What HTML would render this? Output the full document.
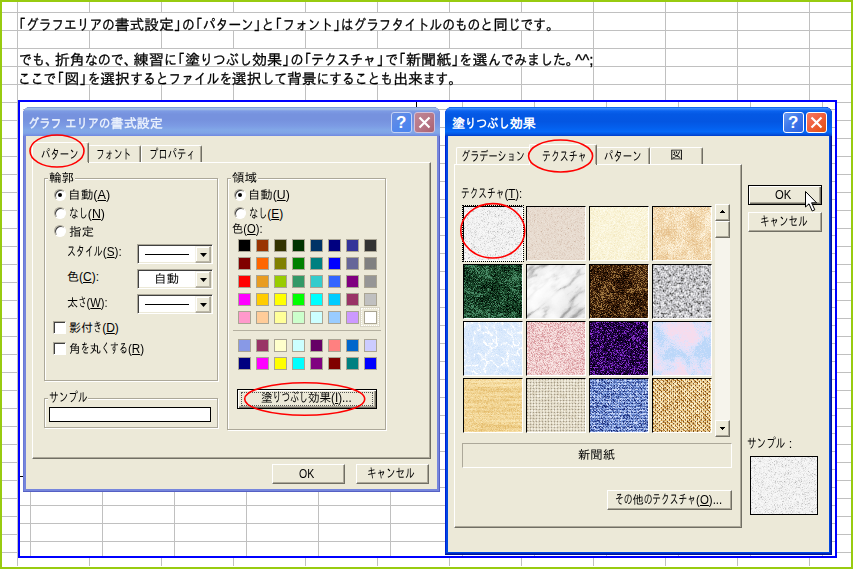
<!DOCTYPE html>
<html lang="ja"><head><meta charset="utf-8"><title>塗りつぶし効果</title>
<style>
html,body{margin:0;padding:0}
body{width:853px;height:569px;overflow:hidden;position:relative;background:#fff;font-family:"Liberation Sans","IPAGothic",sans-serif;font-size:12px;color:#000}
div,span,svg{position:absolute;box-sizing:border-box}
.t{white-space:nowrap;transform-origin:0 0;line-height:1;display:block}
.t .r{position:static;display:inline-block;transform-origin:0 0}
.t u{position:static;text-decoration:underline;text-underline-offset:1px}
.vl{width:1px;background:#c0c0c0}
.hl{height:1px;background:#c0c0c0}
.btn{background:#ece9d8;border:1px solid;border-color:#fff #716f64 #716f64 #fff;box-shadow:inset -1px -1px 0 #aca899}
.sbtn{background:#ece9d8;border:1px solid;border-color:#f4f2e8 #aca899 #aca899 #f4f2e8;box-shadow:inset -1px -1px 0 #bcb8a8, inset 1px 1px 0 #fff}
.dbtn{background:#ece9d8;border:1px solid #000;box-shadow:inset 1px 1px 0 #fff,inset -1px -1px 0 #716f64,inset -2px -2px 0 #aca899}
.sunk{border:1px solid;border-color:#aca899 #fff #fff #aca899;box-shadow:inset 1px 1px 0 #404040, inset -1px -1px 0 #ece9d8;background:#fff}
.grp{border:1px solid #aca899;box-shadow:1px 1px 0 #fff, inset 1px 1px 0 #fff}
.lbl{background:#ece9d8}
.panel{border:1px solid;border-color:#fff #716f64 #716f64 #fff;box-shadow:inset -1px -1px 0 #aca899;background:#ece9d8}
.tab{border:1px solid;border-color:#fff #716f64 transparent #fff;border-bottom:none;box-shadow:inset -1px 0 0 #aca899;background:#ece9d8;border-radius:2px 2px 0 0}
.sw{width:13px;height:13px;border:1px solid #aaa594}
.sw i{position:absolute;left:0;top:0;width:11px;height:11px;display:block}
.radio{width:12px;height:12px;border-radius:50%;background:#fff;border:1px solid;border-color:#aca899 #fff #fff #aca899;box-shadow:inset 1px 1px 0 #404040}
.chk{width:13px;height:13px;background:#fff;border:1px solid;border-color:#aca899 #fff #fff #aca899;box-shadow:inset 1px 1px 0 #404040}
.tile{border:1px solid;border-color:#000 #fff #fff #000;overflow:hidden}
</style></head>
<body>
<svg style="left:0;top:0" width="0" height="0"><defs><filter id="tx0" x="0" y="0" width="100%" height="100%" color-interpolation-filters="sRGB"><feTurbulence type="fractalNoise" baseFrequency="1.7" numOctaves="1" seed="3"/><feColorMatrix type="matrix" values="2.000 0 0 0 -0.500 2.000 0 0 0 -0.500 2.000 0 0 0 -0.500 0 0 0 0 1" result="F"/><feTurbulence type="fractalNoise" baseFrequency="0.25" numOctaves="2" seed="11"/><feColorMatrix type="matrix" values="1.000 0 0 0 0.000 1.000 0 0 0 0.000 1.000 0 0 0 0.000 0 0 0 0 1" result="C"/><feComposite operator="arithmetic" in="F" in2="C" k1="0" k2="0.70" k3="0.30" k4="0" result="N"/><feColorMatrix type="matrix" values="1.500 0 0 0 -0.130 1.500 0 0 0 -0.130 1.500 0 0 0 -0.130 0 0 0 0 1"/><feComponentTransfer><feFuncR type="table" tableValues="0.706 0.847 0.933 0.961 0.976"/><feFuncG type="table" tableValues="0.706 0.847 0.933 0.961 0.976"/><feFuncB type="table" tableValues="0.706 0.847 0.933 0.961 0.976"/></feComponentTransfer></filter><filter id="tx1" x="0" y="0" width="100%" height="100%" color-interpolation-filters="sRGB"><feTurbulence type="fractalNoise" baseFrequency="1.7" numOctaves="1" seed="4"/><feColorMatrix type="matrix" values="1.000 0 0 0 0.000 1.000 0 0 0 0.000 1.000 0 0 0 0.000 0 0 0 0 1" result="F"/><feTurbulence type="fractalNoise" baseFrequency="0.3" numOctaves="1" seed="12"/><feColorMatrix type="matrix" values="0.600 0 0 0 0.200 0.600 0 0 0 0.200 0.600 0 0 0 0.200 0 0 0 0 1" result="C"/><feComposite operator="arithmetic" in="F" in2="C" k1="0" k2="0.80" k3="0.20" k4="0" result="N"/><feColorMatrix type="matrix" values="1.500 0 0 0 -0.250 1.500 0 0 0 -0.250 1.500 0 0 0 -0.250 0 0 0 0 1"/><feComponentTransfer><feFuncR type="table" tableValues="0.722 0.863 0.910 0.925 0.949"/><feFuncG type="table" tableValues="0.596 0.792 0.863 0.886 0.918"/><feFuncB type="table" tableValues="0.502 0.737 0.816 0.847 0.886"/></feComponentTransfer></filter><filter id="tx2" x="0" y="0" width="100%" height="100%" color-interpolation-filters="sRGB"><feTurbulence type="fractalNoise" baseFrequency="1.7" numOctaves="1" seed="5"/><feColorMatrix type="matrix" values="1.600 0 0 0 -0.300 1.600 0 0 0 -0.300 1.600 0 0 0 -0.300 0 0 0 0 1" result="F"/><feTurbulence type="fractalNoise" baseFrequency="0.03" numOctaves="2" seed="13"/><feColorMatrix type="matrix" values="1.500 0 0 0 -0.250 1.500 0 0 0 -0.250 1.500 0 0 0 -0.250 0 0 0 0 1" result="C"/><feComposite operator="arithmetic" in="F" in2="C" k1="0" k2="0.70" k3="0.30" k4="0" result="N"/><feColorMatrix type="matrix" values="1.500 0 0 0 -0.250 1.500 0 0 0 -0.250 1.500 0 0 0 -0.250 0 0 0 0 1"/><feComponentTransfer><feFuncR type="table" tableValues="0.949 0.980 1.000"/><feFuncG type="table" tableValues="0.902 0.957 0.992"/><feFuncB type="table" tableValues="0.737 0.847 0.941"/></feComponentTransfer></filter><filter id="tx3" x="0" y="0" width="100%" height="100%" color-interpolation-filters="sRGB"><feTurbulence type="fractalNoise" baseFrequency="1.7" numOctaves="1" seed="6"/><feColorMatrix type="matrix" values="2.000 0 0 0 -0.500 2.000 0 0 0 -0.500 2.000 0 0 0 -0.500 0 0 0 0 1" result="F"/><feTurbulence type="fractalNoise" baseFrequency="0.06" numOctaves="3" seed="14"/><feColorMatrix type="matrix" values="2.000 0 0 0 -0.500 2.000 0 0 0 -0.500 2.000 0 0 0 -0.500 0 0 0 0 1" result="C"/><feComposite operator="arithmetic" in="F" in2="C" k1="0" k2="0.60" k3="0.40" k4="0" result="N"/><feColorMatrix type="matrix" values="1.700 0 0 0 -0.350 1.700 0 0 0 -0.350 1.700 0 0 0 -0.350 0 0 0 0 1"/><feComponentTransfer><feFuncR type="table" tableValues="0.902 0.957 0.996"/><feFuncG type="table" tableValues="0.753 0.863 0.957"/><feFuncB type="table" tableValues="0.549 0.706 0.878"/></feComponentTransfer></filter><filter id="tx4" x="0" y="0" width="100%" height="100%" color-interpolation-filters="sRGB"><feTurbulence type="fractalNoise" baseFrequency="1.7" numOctaves="1" seed="7"/><feColorMatrix type="matrix" values="3.200 0 0 0 -1.100 3.200 0 0 0 -1.100 3.200 0 0 0 -1.100 0 0 0 0 1" result="F"/><feTurbulence type="fractalNoise" baseFrequency="0.05" numOctaves="3" seed="15"/><feColorMatrix type="matrix" values="1.600 0 0 0 -0.300 1.600 0 0 0 -0.300 1.600 0 0 0 -0.300 0 0 0 0 1" result="C"/><feComposite operator="arithmetic" in="F" in2="C" k1="0" k2="0.65" k3="0.35" k4="0" result="N"/><feTurbulence type="turbulence" baseFrequency="0.04" numOctaves="3" seed="27"/><feColorMatrix type="matrix" values="1 0 0 0 0 1 0 0 0 0 1 0 0 0 0 0 0 0 0 1"/><feComponentTransfer result="V"><feFuncR type="table" tableValues="1 0.45 0.1 0 0 0 0 0 0 0 0 0 0"/><feFuncG type="table" tableValues="1 0.45 0.1 0 0 0 0 0 0 0 0 0 0"/><feFuncB type="table" tableValues="1 0.45 0.1 0 0 0 0 0 0 0 0 0 0"/></feComponentTransfer><feComposite operator="arithmetic" in="N" in2="V" k1="0" k2="1" k3="0.50" k4="0"/><feColorMatrix type="matrix" values="1.500 0 0 0 -0.270 1.500 0 0 0 -0.270 1.500 0 0 0 -0.270 0 0 0 0 1"/><feComponentTransfer><feFuncR type="table" tableValues="0.000 0.039 0.094 0.141 0.298"/><feFuncG type="table" tableValues="0.047 0.157 0.267 0.353 0.549"/><feFuncB type="table" tableValues="0.016 0.078 0.157 0.220 0.408"/></feComponentTransfer></filter><filter id="tx5" x="0" y="0" width="100%" height="100%" color-interpolation-filters="sRGB"><feTurbulence type="fractalNoise" baseFrequency="0.9" numOctaves="1" seed="8"/><feColorMatrix type="matrix" values="0.500 0 0 0 0.250 0.500 0 0 0 0.250 0.500 0 0 0 0.250 0 0 0 0 1" result="F"/><feTurbulence type="fractalNoise" baseFrequency="0.03" numOctaves="3" seed="16"/><feColorMatrix type="matrix" values="1.400 0 0 0 -0.200 1.400 0 0 0 -0.200 1.400 0 0 0 -0.200 0 0 0 0 1" result="C"/><feComposite operator="arithmetic" in="F" in2="C" k1="0" k2="0.30" k3="0.70" k4="0" result="N"/><feTurbulence type="turbulence" baseFrequency="0.025 0.07" numOctaves="4" seed="28"/><feColorMatrix type="matrix" values="1 0 0 0 0 1 0 0 0 0 1 0 0 0 0 0 0 0 0 1"/><feComponentTransfer result="V"><feFuncR type="table" tableValues="1 0.8 0.45 0.2 0.05 0 0 0 0 0 0"/><feFuncG type="table" tableValues="1 0.8 0.45 0.2 0.05 0 0 0 0 0 0"/><feFuncB type="table" tableValues="1 0.8 0.45 0.2 0.05 0 0 0 0 0 0"/></feComponentTransfer><feComposite operator="arithmetic" in="N" in2="V" k1="0" k2="1" k3="0.50" k4="0"/><feColorMatrix type="matrix" values="1.200 0 0 0 -0.300 1.200 0 0 0 -0.300 1.200 0 0 0 -0.300 0 0 0 0 1"/><feComponentTransfer><feFuncR type="table" tableValues="1.000 0.973 0.925 0.784 0.565"/><feFuncG type="table" tableValues="1.000 0.973 0.925 0.784 0.565"/><feFuncB type="table" tableValues="1.000 0.973 0.925 0.784 0.565"/></feComponentTransfer></filter><filter id="tx6" x="0" y="0" width="100%" height="100%" color-interpolation-filters="sRGB"><feTurbulence type="fractalNoise" baseFrequency="1.7" numOctaves="1" seed="9"/><feColorMatrix type="matrix" values="3.200 0 0 0 -1.100 3.200 0 0 0 -1.100 3.200 0 0 0 -1.100 0 0 0 0 1" result="F"/><feTurbulence type="fractalNoise" baseFrequency="0.05" numOctaves="3" seed="17"/><feColorMatrix type="matrix" values="1.600 0 0 0 -0.300 1.600 0 0 0 -0.300 1.600 0 0 0 -0.300 0 0 0 0 1" result="C"/><feComposite operator="arithmetic" in="F" in2="C" k1="0" k2="0.65" k3="0.35" k4="0" result="N"/><feTurbulence type="turbulence" baseFrequency="0.04" numOctaves="3" seed="29"/><feColorMatrix type="matrix" values="1 0 0 0 0 1 0 0 0 0 1 0 0 0 0 0 0 0 0 1"/><feComponentTransfer result="V"><feFuncR type="table" tableValues="1 0.45 0.1 0 0 0 0 0 0 0 0 0 0"/><feFuncG type="table" tableValues="1 0.45 0.1 0 0 0 0 0 0 0 0 0 0"/><feFuncB type="table" tableValues="1 0.45 0.1 0 0 0 0 0 0 0 0 0 0"/></feComponentTransfer><feComposite operator="arithmetic" in="N" in2="V" k1="0" k2="1" k3="0.50" k4="0"/><feColorMatrix type="matrix" values="1.500 0 0 0 -0.280 1.500 0 0 0 -0.280 1.500 0 0 0 -0.280 0 0 0 0 1"/><feComponentTransfer><feFuncR type="table" tableValues="0.047 0.157 0.251 0.361 0.627"/><feFuncG type="table" tableValues="0.012 0.071 0.133 0.220 0.471"/><feFuncB type="table" tableValues="0.000 0.016 0.047 0.094 0.251"/></feComponentTransfer></filter><filter id="tx7" x="0" y="0" width="100%" height="100%" color-interpolation-filters="sRGB"><feTurbulence type="fractalNoise" baseFrequency="0.6" numOctaves="1" seed="10"/><feColorMatrix type="matrix" values="2.000 0 0 0 -0.500 2.000 0 0 0 -0.500 2.000 0 0 0 -0.500 0 0 0 0 1" result="F"/><feTurbulence type="fractalNoise" baseFrequency="0.25" numOctaves="2" seed="18"/><feColorMatrix type="matrix" values="1.600 0 0 0 -0.300 1.600 0 0 0 -0.300 1.600 0 0 0 -0.300 0 0 0 0 1" result="C"/><feComposite operator="arithmetic" in="F" in2="C" k1="0" k2="0.55" k3="0.45" k4="0" result="N"/><feColorMatrix type="matrix" values="1.500 0 0 0 -0.190 1.500 0 0 0 -0.190 1.500 0 0 0 -0.190 0 0 0 0 1"/><feComponentTransfer><feFuncR type="table" tableValues="0.282 0.565 0.737 0.847 0.957"/><feFuncG type="table" tableValues="0.282 0.565 0.737 0.847 0.957"/><feFuncB type="table" tableValues="0.282 0.565 0.753 0.863 0.957"/></feComponentTransfer></filter><filter id="tx8" x="0" y="0" width="100%" height="100%" color-interpolation-filters="sRGB"><feTurbulence type="fractalNoise" baseFrequency="1.7" numOctaves="1" seed="11"/><feColorMatrix type="matrix" values="1.400 0 0 0 -0.200 1.400 0 0 0 -0.200 1.400 0 0 0 -0.200 0 0 0 0 1" result="F"/><feTurbulence type="fractalNoise" baseFrequency="0.05" numOctaves="2" seed="19"/><feColorMatrix type="matrix" values="1.200 0 0 0 -0.100 1.200 0 0 0 -0.100 1.200 0 0 0 -0.100 0 0 0 0 1" result="C"/><feComposite operator="arithmetic" in="F" in2="C" k1="0" k2="0.60" k3="0.40" k4="0" result="N"/><feTurbulence type="turbulence" baseFrequency="0.09" numOctaves="2" seed="31"/><feColorMatrix type="matrix" values="1 0 0 0 0 1 0 0 0 0 1 0 0 0 0 0 0 0 0 1"/><feComponentTransfer result="V"><feFuncR type="table" tableValues="1 0.45 0.1 0 0 0 0 0 0 0 0 0 0"/><feFuncG type="table" tableValues="1 0.45 0.1 0 0 0 0 0 0 0 0 0 0"/><feFuncB type="table" tableValues="1 0.45 0.1 0 0 0 0 0 0 0 0 0 0"/></feComponentTransfer><feComposite operator="arithmetic" in="N" in2="V" k1="0" k2="1" k3="0.50" k4="0"/><feColorMatrix type="matrix" values="1.500 0 0 0 -0.290 1.500 0 0 0 -0.290 1.500 0 0 0 -0.290 0 0 0 0 1"/><feComponentTransfer><feFuncR type="table" tableValues="0.769 0.839 0.886 1.000"/><feFuncG type="table" tableValues="0.863 0.906 0.933 1.000"/><feFuncB type="table" tableValues="0.973 0.988 0.992 1.000"/></feComponentTransfer></filter><filter id="tx9" x="0" y="0" width="100%" height="100%" color-interpolation-filters="sRGB"><feTurbulence type="fractalNoise" baseFrequency="1.7" numOctaves="1" seed="12"/><feColorMatrix type="matrix" values="2.600 0 0 0 -0.800 2.600 0 0 0 -0.800 2.600 0 0 0 -0.800 0 0 0 0 1" result="F"/><feTurbulence type="fractalNoise" baseFrequency="0.08" numOctaves="2" seed="20"/><feColorMatrix type="matrix" values="1.200 0 0 0 -0.100 1.200 0 0 0 -0.100 1.200 0 0 0 -0.100 0 0 0 0 1" result="C"/><feComposite operator="arithmetic" in="F" in2="C" k1="0" k2="0.80" k3="0.20" k4="0" result="N"/><feColorMatrix type="matrix" values="1.500 0 0 0 -0.220 1.500 0 0 0 -0.220 1.500 0 0 0 -0.220 0 0 0 0 1"/><feComponentTransfer><feFuncR type="table" tableValues="0.847 0.933 0.980"/><feFuncG type="table" tableValues="0.596 0.784 0.910"/><feFuncB type="table" tableValues="0.612 0.792 0.902"/></feComponentTransfer></filter><filter id="tx10" x="0" y="0" width="100%" height="100%" color-interpolation-filters="sRGB"><feTurbulence type="fractalNoise" baseFrequency="1.7" numOctaves="1" seed="13"/><feColorMatrix type="matrix" values="3.400 0 0 0 -1.200 3.400 0 0 0 -1.200 3.400 0 0 0 -1.200 0 0 0 0 1" result="F"/><feTurbulence type="fractalNoise" baseFrequency="0.08" numOctaves="2" seed="21"/><feColorMatrix type="matrix" values="1.600 0 0 0 -0.300 1.600 0 0 0 -0.300 1.600 0 0 0 -0.300 0 0 0 0 1" result="C"/><feComposite operator="arithmetic" in="F" in2="C" k1="0" k2="0.75" k3="0.25" k4="0" result="N"/><feColorMatrix type="matrix" values="1.700 0 0 0 -0.390 1.700 0 0 0 -0.390 1.700 0 0 0 -0.390 0 0 0 0 1"/><feComponentTransfer><feFuncR type="table" tableValues="0.016 0.125 0.212 0.549"/><feFuncG type="table" tableValues="0.000 0.016 0.027 0.204"/><feFuncB type="table" tableValues="0.063 0.251 0.416 0.816"/></feComponentTransfer></filter><filter id="tx11" x="0" y="0" width="100%" height="100%" color-interpolation-filters="sRGB"><feTurbulence type="fractalNoise" baseFrequency="1.7" numOctaves="1" seed="14"/><feColorMatrix type="matrix" values="1.800 0 0 0 -0.400 1.800 0 0 0 -0.400 1.800 0 0 0 -0.400 0 0 0 0 1" result="F"/><feTurbulence type="fractalNoise" baseFrequency="0.045" numOctaves="3" seed="22"/><feColorMatrix type="matrix" values="2.600 0 0 0 -0.800 2.600 0 0 0 -0.800 2.600 0 0 0 -0.800 0 0 0 0 1" result="C"/><feComposite operator="arithmetic" in="F" in2="C" k1="0" k2="0.45" k3="0.55" k4="0" result="N"/><feColorMatrix type="matrix" values="2.000 0 0 0 -0.500 2.000 0 0 0 -0.500 2.000 0 0 0 -0.500 0 0 0 0 1"/><feComponentTransfer><feFuncR type="table" tableValues="0.737 0.847 0.910 0.965"/><feFuncG type="table" tableValues="0.847 0.886 0.886 0.863"/><feFuncB type="table" tableValues="0.980 0.984 0.976 0.933"/></feComponentTransfer></filter><filter id="tx12" x="0" y="0" width="100%" height="100%" color-interpolation-filters="sRGB"><feTurbulence type="fractalNoise" baseFrequency="1.7" numOctaves="1" seed="15"/><feColorMatrix type="matrix" values="1.600 0 0 0 -0.300 1.600 0 0 0 -0.300 1.600 0 0 0 -0.300 0 0 0 0 1" result="F"/><feTurbulence type="fractalNoise" baseFrequency="0.015 0.4" numOctaves="2" seed="23"/><feColorMatrix type="matrix" values="1.800 0 0 0 -0.400 1.800 0 0 0 -0.400 1.800 0 0 0 -0.400 0 0 0 0 1" result="C"/><feComposite operator="arithmetic" in="F" in2="C" k1="0" k2="0.60" k3="0.40" k4="0" result="N"/><feColorMatrix type="matrix" values="1.600 0 0 0 -0.300 1.600 0 0 0 -0.300 1.600 0 0 0 -0.300 0 0 0 0 1"/><feComponentTransfer><feFuncR type="table" tableValues="0.894 0.953 0.988"/><feFuncG type="table" tableValues="0.737 0.843 0.922"/><feFuncB type="table" tableValues="0.424 0.596 0.737"/></feComponentTransfer></filter><filter id="tx13" x="0" y="0" width="100%" height="100%" color-interpolation-filters="sRGB"><feTurbulence type="fractalNoise" baseFrequency="1.7" numOctaves="1" seed="16"/><feColorMatrix type="matrix" values="1.400 0 0 0 -0.200 1.400 0 0 0 -0.200 1.400 0 0 0 -0.200 0 0 0 0 1" result="F"/><feTurbulence type="fractalNoise" baseFrequency="0.2" numOctaves="1" seed="24"/><feColorMatrix type="matrix" values="1.000 0 0 0 0.000 1.000 0 0 0 0.000 1.000 0 0 0 0.000 0 0 0 0 1" result="C"/><feComposite operator="arithmetic" in="F" in2="C" k1="0" k2="0.80" k3="0.20" k4="0" result="N"/><feColorMatrix type="matrix" values="1.500 0 0 0 -0.200 1.500 0 0 0 -0.200 1.500 0 0 0 -0.200 0 0 0 0 1"/><feComponentTransfer><feFuncR type="table" tableValues="0.831 0.925 0.973"/><feFuncG type="table" tableValues="0.784 0.902 0.957"/><feFuncB type="table" tableValues="0.690 0.831 0.918"/></feComponentTransfer></filter><filter id="tx14" x="0" y="0" width="100%" height="100%" color-interpolation-filters="sRGB"><feTurbulence type="fractalNoise" baseFrequency="1.7" numOctaves="1" seed="17"/><feColorMatrix type="matrix" values="3.000 0 0 0 -1.000 3.000 0 0 0 -1.000 3.000 0 0 0 -1.000 0 0 0 0 1" result="F"/><feTurbulence type="fractalNoise" baseFrequency="0.2" numOctaves="2" seed="25"/><feColorMatrix type="matrix" values="1.500 0 0 0 -0.250 1.500 0 0 0 -0.250 1.500 0 0 0 -0.250 0 0 0 0 1" result="C"/><feComposite operator="arithmetic" in="F" in2="C" k1="0" k2="0.70" k3="0.30" k4="0" result="N"/><feColorMatrix type="matrix" values="1.700 0 0 0 -0.300 1.700 0 0 0 -0.300 1.700 0 0 0 -0.300 0 0 0 0 1"/><feComponentTransfer><feFuncR type="table" tableValues="0.110 0.345 0.486 0.769"/><feFuncG type="table" tableValues="0.188 0.471 0.612 0.831"/><feFuncB type="table" tableValues="0.502 0.784 0.878 0.973"/></feComponentTransfer></filter><filter id="tx15" x="0" y="0" width="100%" height="100%" color-interpolation-filters="sRGB"><feTurbulence type="fractalNoise" baseFrequency="1.7" numOctaves="1" seed="18"/><feColorMatrix type="matrix" values="2.600 0 0 0 -0.800 2.600 0 0 0 -0.800 2.600 0 0 0 -0.800 0 0 0 0 1" result="F"/><feTurbulence type="fractalNoise" baseFrequency="0.2" numOctaves="2" seed="26"/><feColorMatrix type="matrix" values="1.500 0 0 0 -0.250 1.500 0 0 0 -0.250 1.500 0 0 0 -0.250 0 0 0 0 1" result="C"/><feComposite operator="arithmetic" in="F" in2="C" k1="0" k2="0.70" k3="0.30" k4="0" result="N"/><feColorMatrix type="matrix" values="1.600 0 0 0 -0.260 1.600 0 0 0 -0.260 1.600 0 0 0 -0.260 0 0 0 0 1"/><feComponentTransfer><feFuncR type="table" tableValues="0.596 0.831 0.925 0.988"/><feFuncG type="table" tableValues="0.361 0.643 0.816 0.941"/><feFuncB type="table" tableValues="0.078 0.345 0.580 0.800"/></feComponentTransfer></filter><pattern id="wv1" width="3" height="3" patternUnits="userSpaceOnUse"><rect width="3" height="1" fill="#5c4c30" opacity=".13"/><rect width="1" height="3" fill="#5c4c30" opacity=".13"/><rect width="1" height="1" fill="#403020" opacity=".25"/></pattern><pattern id="wv2" width="3" height="3" patternUnits="userSpaceOnUse"><rect width="1" height="1" fill="#102060" opacity=".6"/><rect x="1" y="1" width="2" height="1" fill="#e4ecff" opacity=".32"/><rect x="2" y="0" width="1" height="1" fill="#102060" opacity=".25"/><rect x="0" y="2" width="1" height="1" fill="#e4ecff" opacity=".25"/></pattern><pattern id="wv3" width="4" height="4" patternUnits="userSpaceOnUse"><rect width="1" height="1" fill="#4a2000" opacity=".7"/><rect x="2" y="2" width="1" height="1" fill="#4a2000" opacity=".7"/><rect x="1" y="0" width="2" height="1" fill="#fff8d8" opacity=".55"/><rect x="3" y="2" width="1" height="1" fill="#fff8d8" opacity=".55"/><rect x="0" y="2" width="1" height="1" fill="#fff8d8" opacity=".55"/><rect x="0" y="1" width="1" height="1" fill="#c87818" opacity=".5"/><rect x="2" y="3" width="1" height="1" fill="#c87818" opacity=".5"/><rect x="3" y="0" width="1" height="2" fill="#fff8d8" opacity=".35"/><rect x="1" y="2" width="1" height="2" fill="#fff8d8" opacity=".35"/></pattern></defs></svg>
<div style="left:0;top:0;width:853px;height:569px;border:2px solid #98cb10"></div>
<div class="vl" style="left:17px;top:2px;width:1px;height:564px;"></div>
<div class="vl" style="left:89px;top:2px;width:1px;height:564px;"></div>
<div class="vl" style="left:161px;top:2px;width:1px;height:564px;"></div>
<div class="vl" style="left:233px;top:2px;width:1px;height:564px;"></div>
<div class="vl" style="left:305px;top:2px;width:1px;height:564px;"></div>
<div class="vl" style="left:377px;top:2px;width:1px;height:564px;"></div>
<div class="vl" style="left:449px;top:2px;width:1px;height:564px;"></div>
<div class="vl" style="left:521px;top:2px;width:1px;height:564px;"></div>
<div class="vl" style="left:593px;top:2px;width:1px;height:564px;"></div>
<div class="vl" style="left:665px;top:2px;width:1px;height:564px;"></div>
<div class="vl" style="left:737px;top:2px;width:1px;height:564px;"></div>
<div class="vl" style="left:809px;top:2px;width:1px;height:564px;"></div>
<div class="hl" style="left:2px;top:12px;width:849px;height:1px;"></div>
<div class="hl" style="left:2px;top:30px;width:849px;height:1px;"></div>
<div class="hl" style="left:2px;top:48px;width:849px;height:1px;"></div>
<div class="hl" style="left:2px;top:66px;width:849px;height:1px;"></div>
<div class="hl" style="left:2px;top:84px;width:849px;height:1px;"></div>
<div class="hl" style="left:2px;top:102px;width:849px;height:1px;"></div>
<div class="hl" style="left:2px;top:120px;width:849px;height:1px;"></div>
<div class="hl" style="left:2px;top:138px;width:849px;height:1px;"></div>
<div class="hl" style="left:2px;top:156px;width:849px;height:1px;"></div>
<div class="hl" style="left:2px;top:174px;width:849px;height:1px;"></div>
<div class="hl" style="left:2px;top:192px;width:849px;height:1px;"></div>
<div class="hl" style="left:2px;top:210px;width:849px;height:1px;"></div>
<div class="hl" style="left:2px;top:228px;width:849px;height:1px;"></div>
<div class="hl" style="left:2px;top:246px;width:849px;height:1px;"></div>
<div class="hl" style="left:2px;top:264px;width:849px;height:1px;"></div>
<div class="hl" style="left:2px;top:282px;width:849px;height:1px;"></div>
<div class="hl" style="left:2px;top:300px;width:849px;height:1px;"></div>
<div class="hl" style="left:2px;top:318px;width:849px;height:1px;"></div>
<div class="hl" style="left:2px;top:336px;width:849px;height:1px;"></div>
<div class="hl" style="left:2px;top:354px;width:849px;height:1px;"></div>
<div class="hl" style="left:2px;top:372px;width:849px;height:1px;"></div>
<div class="hl" style="left:2px;top:390px;width:849px;height:1px;"></div>
<div class="hl" style="left:2px;top:408px;width:849px;height:1px;"></div>
<div class="hl" style="left:2px;top:426px;width:849px;height:1px;"></div>
<div class="hl" style="left:2px;top:444px;width:849px;height:1px;"></div>
<div class="hl" style="left:2px;top:462px;width:849px;height:1px;"></div>
<div class="hl" style="left:2px;top:480px;width:849px;height:1px;"></div>
<div class="hl" style="left:2px;top:498px;width:849px;height:1px;"></div>
<div class="hl" style="left:2px;top:516px;width:849px;height:1px;"></div>
<div class="hl" style="left:2px;top:534px;width:849px;height:1px;"></div>
<div class="hl" style="left:2px;top:552px;width:849px;height:1px;"></div>
<div class="" style="left:18px;top:13px;width:575px;height:17px;background:#fff"></div>
<div class="" style="left:18px;top:49px;width:575px;height:17px;background:#fff"></div>
<div class="" style="left:18px;top:67px;width:503px;height:17px;background:#fff"></div>
<span class="t" style="left:17.98px;top:18px;font-size:14.67px;color:#000;transform:scaleX(1.0057);-webkit-text-stroke:0.3px #000;"><span class="r" style="margin-left:-6.60px">「</span><span class="r" style="transform:scaleX(0.86);margin-right:-14.38px">グラフエリアの</span>書式設定<span class="r" style="margin-right:-6.60px">」</span><span class="r" style="transform:scaleX(0.86);margin-right:-2.05px">の</span><span class="r" style="margin-left:-6.60px">「</span><span class="r" style="transform:scaleX(0.86);margin-right:-8.22px">パターン</span><span class="r" style="margin-right:-6.60px">」</span><span class="r" style="transform:scaleX(0.86);margin-right:-2.05px">と</span><span class="r" style="margin-left:-6.60px">「</span><span class="r" style="transform:scaleX(0.86);margin-right:-8.22px">フォント</span><span class="r" style="margin-right:-6.60px">」</span><span class="r" style="transform:scaleX(0.86);margin-right:-24.65px">はグラフタイトルのものと</span>同<span class="r" style="transform:scaleX(0.86);margin-right:-6.16px">じです</span><span class="r" style="margin-right:-5.13px">。</span></span>
<span class="t" style="left:18.97px;top:53px;font-size:14.67px;color:#000;transform:scaleX(1.0287);-webkit-text-stroke:0.3px #000;"><span class="r" style="transform:scaleX(0.86);margin-right:-4.11px">でも</span><span class="r" style="margin-right:-5.13px">、</span>折角<span class="r" style="transform:scaleX(0.86);margin-right:-6.16px">なので</span><span class="r" style="margin-right:-5.13px">、</span>練習<span class="r" style="transform:scaleX(0.86);margin-right:-2.05px">に</span><span class="r" style="margin-left:-6.60px">「</span>塗<span class="r" style="transform:scaleX(0.86);margin-right:-8.22px">りつぶし</span>効果<span class="r" style="margin-right:-6.60px">」</span><span class="r" style="transform:scaleX(0.86);margin-right:-2.05px">の</span><span class="r" style="margin-left:-6.60px">「</span><span class="r" style="transform:scaleX(0.86);margin-right:-10.27px">テクスチャ</span><span class="r" style="margin-right:-6.60px">」</span><span class="r" style="transform:scaleX(0.86);margin-right:-2.05px">で</span><span class="r" style="margin-left:-6.60px">「</span>新聞紙<span class="r" style="margin-right:-6.60px">」</span><span class="r" style="transform:scaleX(0.86);margin-right:-2.05px">を</span>選<span class="r" style="transform:scaleX(0.86);margin-right:-12.32px">んでみました</span><span class="r" style="margin-right:-5.13px">。</span>^^;</span>
<span class="t" style="left:17.98px;top:72px;font-size:14.67px;color:#000;transform:scaleX(1.0117);-webkit-text-stroke:0.3px #000;"><span class="r" style="transform:scaleX(0.86);margin-right:-6.16px">ここで</span><span class="r" style="margin-left:-6.60px">「</span>図<span class="r" style="margin-right:-6.60px">」</span><span class="r" style="transform:scaleX(0.86);margin-right:-2.05px">を</span>選択<span class="r" style="transform:scaleX(0.86);margin-right:-16.43px">するとファイルを</span>選択<span class="r" style="transform:scaleX(0.86);margin-right:-4.11px">して</span>背景<span class="r" style="transform:scaleX(0.86);margin-right:-12.32px">にすることも</span>出来<span class="r" style="transform:scaleX(0.86);margin-right:-4.11px">ます</span><span class="r" style="margin-right:-5.13px">。</span></span>
<div style="left:18px;top:100px;width:819px;height:458px;border:2px solid #0000ff;background:#fff"></div>
<div class="vl" style="left:30px;top:102px;width:1px;height:454px;"></div>
<div class="vl" style="left:102px;top:102px;width:1px;height:454px;"></div>
<div class="vl" style="left:174px;top:102px;width:1px;height:454px;"></div>
<div class="vl" style="left:246px;top:102px;width:1px;height:454px;"></div>
<div class="vl" style="left:318px;top:102px;width:1px;height:454px;"></div>
<div class="vl" style="left:390px;top:102px;width:1px;height:454px;"></div>
<div class="vl" style="left:462px;top:102px;width:1px;height:454px;"></div>
<div class="vl" style="left:534px;top:102px;width:1px;height:454px;"></div>
<div class="vl" style="left:606px;top:102px;width:1px;height:454px;"></div>
<div class="vl" style="left:678px;top:102px;width:1px;height:454px;"></div>
<div class="vl" style="left:750px;top:102px;width:1px;height:454px;"></div>
<div class="vl" style="left:822px;top:102px;width:1px;height:454px;"></div>
<div class="hl" style="left:20px;top:109px;width:815px;height:1px;"></div>
<div class="hl" style="left:20px;top:127px;width:815px;height:1px;"></div>
<div class="hl" style="left:20px;top:145px;width:815px;height:1px;"></div>
<div class="hl" style="left:20px;top:163px;width:815px;height:1px;"></div>
<div class="hl" style="left:20px;top:181px;width:815px;height:1px;"></div>
<div class="hl" style="left:20px;top:199px;width:815px;height:1px;"></div>
<div class="hl" style="left:20px;top:217px;width:815px;height:1px;"></div>
<div class="hl" style="left:20px;top:235px;width:815px;height:1px;"></div>
<div class="hl" style="left:20px;top:253px;width:815px;height:1px;"></div>
<div class="hl" style="left:20px;top:271px;width:815px;height:1px;"></div>
<div class="hl" style="left:20px;top:289px;width:815px;height:1px;"></div>
<div class="hl" style="left:20px;top:307px;width:815px;height:1px;"></div>
<div class="hl" style="left:20px;top:325px;width:815px;height:1px;"></div>
<div class="hl" style="left:20px;top:343px;width:815px;height:1px;"></div>
<div class="hl" style="left:20px;top:361px;width:815px;height:1px;"></div>
<div class="hl" style="left:20px;top:379px;width:815px;height:1px;"></div>
<div class="hl" style="left:20px;top:397px;width:815px;height:1px;"></div>
<div class="hl" style="left:20px;top:415px;width:815px;height:1px;"></div>
<div class="hl" style="left:20px;top:433px;width:815px;height:1px;"></div>
<div class="hl" style="left:20px;top:451px;width:815px;height:1px;"></div>
<div class="hl" style="left:20px;top:469px;width:815px;height:1px;"></div>
<div class="hl" style="left:20px;top:487px;width:815px;height:1px;"></div>
<div class="hl" style="left:20px;top:505px;width:815px;height:1px;"></div>
<div class="hl" style="left:20px;top:523px;width:815px;height:1px;"></div>
<div class="hl" style="left:20px;top:541px;width:815px;height:1px;"></div>
<div class="" style="left:20px;top:102px;width:420px;height:5px;background:#fff"></div>
<div class="" style="left:20px;top:102px;width:3px;height:390px;background:#fff"></div>
<div class="" style="left:20px;top:476px;width:3px;height:1px;background:#000"></div>
<div class="" style="left:416px;top:102px;width:1px;height:5px;background:#000"></div>
<div style="left:23px;top:107px;width:417px;height:385px;background:#7686dc;border-radius:7px 7px 0 0;box-shadow:inset 0 -1px 0 #5560c4, inset 1px 0 0 #6878d4, inset -1px 0 0 #5560c4"></div>
<div style="left:23px;top:107px;width:417px;height:29px;border-radius:7px 7px 0 0;background:linear-gradient(#6e8cd7 0%,#a0bee6 5%,#9cb8e6 8%,#7d9be4 14%,#7692de 25%,#7692de 45%,#7c9be4 65%,#82a8e8 80%,#80a4e6 90%,#7088e0 100%)"></div>
<div class="" style="left:26px;top:136px;width:411px;height:353px;background:#ece9d8"></div>
<span class="t" style="left:27.98px;top:117px;font-size:13px;color:#e6eefc;font-weight:bold;transform:scaleX(1.0076);"><span class="r" style="transform:scaleX(0.86);margin-right:-5.46px">グラフ</span> <span class="r" style="transform:scaleX(0.86);margin-right:-7.28px">エリアの</span>書式設定</span>
<div style="left:391px;top:112px;width:21px;height:21px;border:1px solid #c4d2f4;border-radius:3px;background:linear-gradient(135deg,#6c8ee0 0%,#5488ec 50%,#4884f0 100%)"></div>
<span class="t" style="left:396px;top:113px;font:bold 17px/19px 'Liberation Sans',sans-serif;color:#fff">?</span>
<div style="left:414px;top:112px;width:21px;height:21px;border:1px solid #d4c0d8;border-radius:3px;background:linear-gradient(135deg,#c08696 0%,#b87888 50%,#aa6070 100%)"></div>
<svg style="left:414px;top:112px" width="21" height="21" viewBox="0 0 21 21"><path d="M5.5 5.5 L15.5 15.5 M15.5 5.5 L5.5 15.5" stroke="#fff" stroke-width="2.2" stroke-linecap="butt" fill="none"/></svg>
<div class="panel" style="left:32px;top:162px;width:399px;height:297px;"></div>
<div class="tab" style="left:88px;top:145px;width:53px;height:17px;"></div>
<div class="tab" style="left:141px;top:145px;width:61px;height:17px;"></div>
<div class="tab" style="left:32px;top:142px;width:57px;height:21px;border-bottom:none"></div>
<div class="" style="left:33px;top:162px;width:55px;height:1px;background:#ece9d8"></div>
<span class="t" style="left:40.97px;top:148px;font-size:12px;color:#000;transform:scaleX(1.0294);"><span class="r" style="font-size:13.5px;transform:scaleX(0.676);margin-right:-17.52px">パターン</span></span>
<span class="t" style="left:96.03px;top:148px;font-size:12px;color:#000;transform:scaleX(0.9706);"><span class="r" style="font-size:13.5px;transform:scaleX(0.676);margin-right:-17.52px">フォント</span></span>
<span class="t" style="left:148.98px;top:148px;font-size:12px;color:#000;transform:scaleX(1.0238);"><span class="r" style="font-size:13.5px;transform:scaleX(0.676);margin-right:-21.90px">プロパティ</span></span>
<div class="grp" style="left:44px;top:178px;width:174px;height:203px;"></div>
<div class="lbl" style="left:48px;top:172px;width:27px;height:12px;"></div>
<span class="t" style="left:48.95px;top:172px;font-size:12px;color:#000;transform:scaleX(1.0455);">輪郭</span>
<div class="radio" style="left:54px;top:189px;width:12px;height:12px;"></div>
<div class="" style="left:58px;top:193px;width:4px;height:4px;background:#000;border-radius:50%"></div>
<span class="t" style="left:67.89px;top:189px;font-size:12px;color:#000;transform:scaleX(1.0541);">自動(<u>A</u>)</span>
<div class="radio" style="left:54px;top:207px;width:12px;height:12px;"></div>
<span class="t" style="left:68.97px;top:207px;font-size:12px;color:#000;transform:scaleX(1.0303);"><span class="r" style="font-size:13.5px;transform:scaleX(0.676);margin-right:-8.76px">なし</span>(<u>N</u>)</span>
<div class="radio" style="left:54px;top:225px;width:12px;height:12px;"></div>
<span class="t" style="left:68.95px;top:226px;font-size:12px;color:#000;transform:scaleX(1.0455);">指定</span>
<span class="t" style="left:67.02px;top:245px;font-size:12px;color:#000;transform:scaleX(0.9815);"><span class="r" style="font-size:13.5px;transform:scaleX(0.676);margin-right:-17.52px">スタイル</span>(<u>S</u>):</span>
<span class="t" style="left:67.0px;top:271px;font-size:12px;color:#000;transform:scaleX(1.0000);">色(<u>C</u>):</span>
<span class="t" style="left:67.07px;top:296px;font-size:12px;color:#000;transform:scaleX(0.9286);">太<span class="r" style="font-size:13.5px;transform:scaleX(0.676);margin-right:-4.38px">さ</span>(<u>W</u>):</span>
<div class="sunk" style="left:137px;top:244px;width:76px;height:20px;"></div>
<div class="sbtn" style="left:195px;top:246px;width:16px;height:17px;"></div>
<svg style="left:200px;top:253px" width="7" height="4" viewBox="0 0 7 4"><path d="M0 0H7L3.5 4Z" fill="#000"/></svg>
<div class="" style="left:145px;top:254px;width:44px;height:1px;background:#000"></div>
<div class="sunk" style="left:137px;top:269px;width:76px;height:20px;"></div>
<div class="sbtn" style="left:195px;top:271px;width:16px;height:17px;"></div>
<svg style="left:200px;top:278px" width="7" height="4" viewBox="0 0 7 4"><path d="M0 0H7L3.5 4Z" fill="#000"/></svg>
<span class="t" style="left:153.9px;top:273px;font-size:12px;color:#000;transform:scaleX(1.0476);">自動</span>
<div class="sunk" style="left:137px;top:294px;width:76px;height:20px;"></div>
<div class="sbtn" style="left:195px;top:296px;width:16px;height:17px;"></div>
<svg style="left:200px;top:303px" width="7" height="4" viewBox="0 0 7 4"><path d="M0 0H7L3.5 4Z" fill="#000"/></svg>
<div class="" style="left:145px;top:304px;width:44px;height:1px;background:#000"></div>
<div class="chk" style="left:53px;top:321px;width:13px;height:13px;"></div>
<span class="t" style="left:69.0px;top:321px;font-size:12px;color:#000;transform:scaleX(1.0000);">影付<span class="r" style="font-size:13.5px;transform:scaleX(0.676);margin-right:-4.38px">き</span>(<u>D</u>)</span>
<div class="chk" style="left:53px;top:342px;width:13px;height:13px;"></div>
<span class="t" style="left:69.03px;top:342px;font-size:12px;color:#000;transform:scaleX(0.9737);">角<span class="r" style="font-size:13.5px;transform:scaleX(0.676);margin-right:-4.38px">を</span>丸<span class="r" style="font-size:13.5px;transform:scaleX(0.676);margin-right:-13.14px">くする</span>(<u>R</u>)</span>
<div class="grp" style="left:44px;top:398px;width:174px;height:30px;"></div>
<div class="lbl" style="left:48px;top:391px;width:40px;height:12px;"></div>
<span class="t" style="left:48.94px;top:391px;font-size:12px;color:#000;transform:scaleX(1.0571);"><span class="r" style="font-size:13.5px;transform:scaleX(0.676);margin-right:-17.52px">サンプル</span></span>
<div class="" style="left:49px;top:407px;width:162px;height:15px;background:#fff;border:1px solid #000"></div>
<div class="grp" style="left:227px;top:178px;width:159px;height:252px;"></div>
<div class="lbl" style="left:231px;top:172px;width:27px;height:12px;"></div>
<span class="t" style="left:231.95px;top:172px;font-size:12px;color:#000;transform:scaleX(1.0455);">領域</span>
<div class="radio" style="left:234px;top:189px;width:12px;height:12px;"></div>
<div class="" style="left:238px;top:193px;width:4px;height:4px;background:#000;border-radius:50%"></div>
<span class="t" style="left:247.95px;top:189px;font-size:12px;color:#000;transform:scaleX(1.0263);">自動(<u>U</u>)</span>
<div class="radio" style="left:234px;top:207px;width:12px;height:12px;"></div>
<span class="t" style="left:249.0px;top:207px;font-size:12px;color:#000;transform:scaleX(1.0000);"><span class="r" style="font-size:13.5px;transform:scaleX(0.676);margin-right:-8.76px">なし</span>(<u>E</u>)</span>
<span class="t" style="left:232.06px;top:223px;font-size:12px;color:#000;transform:scaleX(0.9355);">色(<u>O</u>):</span>
<div class="sw" style="left:238px;top:239px"><i style="background:#000000"></i></div>
<div class="sw" style="left:256px;top:239px"><i style="background:#993300"></i></div>
<div class="sw" style="left:274px;top:239px"><i style="background:#333300"></i></div>
<div class="sw" style="left:292px;top:239px"><i style="background:#003300"></i></div>
<div class="sw" style="left:310px;top:239px"><i style="background:#003366"></i></div>
<div class="sw" style="left:328px;top:239px"><i style="background:#000080"></i></div>
<div class="sw" style="left:346px;top:239px"><i style="background:#333399"></i></div>
<div class="sw" style="left:364px;top:239px"><i style="background:#333333"></i></div>
<div class="sw" style="left:238px;top:257px"><i style="background:#800000"></i></div>
<div class="sw" style="left:256px;top:257px"><i style="background:#FF6600"></i></div>
<div class="sw" style="left:274px;top:257px"><i style="background:#808000"></i></div>
<div class="sw" style="left:292px;top:257px"><i style="background:#008000"></i></div>
<div class="sw" style="left:310px;top:257px"><i style="background:#008080"></i></div>
<div class="sw" style="left:328px;top:257px"><i style="background:#0000FF"></i></div>
<div class="sw" style="left:346px;top:257px"><i style="background:#666699"></i></div>
<div class="sw" style="left:364px;top:257px"><i style="background:#808080"></i></div>
<div class="sw" style="left:238px;top:275px"><i style="background:#FF0000"></i></div>
<div class="sw" style="left:256px;top:275px"><i style="background:#E89C20"></i></div>
<div class="sw" style="left:274px;top:275px"><i style="background:#99CC00"></i></div>
<div class="sw" style="left:292px;top:275px"><i style="background:#339966"></i></div>
<div class="sw" style="left:310px;top:275px"><i style="background:#33CCCC"></i></div>
<div class="sw" style="left:328px;top:275px"><i style="background:#3366FF"></i></div>
<div class="sw" style="left:346px;top:275px"><i style="background:#800080"></i></div>
<div class="sw" style="left:364px;top:275px"><i style="background:#969696"></i></div>
<div class="sw" style="left:238px;top:293px"><i style="background:#FF00FF"></i></div>
<div class="sw" style="left:256px;top:293px"><i style="background:#FFCC00"></i></div>
<div class="sw" style="left:274px;top:293px"><i style="background:#FFFF00"></i></div>
<div class="sw" style="left:292px;top:293px"><i style="background:#00FF00"></i></div>
<div class="sw" style="left:310px;top:293px"><i style="background:#00FFFF"></i></div>
<div class="sw" style="left:328px;top:293px"><i style="background:#00CCFF"></i></div>
<div class="sw" style="left:346px;top:293px"><i style="background:#993366"></i></div>
<div class="sw" style="left:364px;top:293px"><i style="background:#C0C0C0"></i></div>
<div class="sw" style="left:238px;top:311px"><i style="background:#FF99CC"></i></div>
<div class="sw" style="left:256px;top:311px"><i style="background:#FFCC99"></i></div>
<div class="sw" style="left:274px;top:311px"><i style="background:#FFFF99"></i></div>
<div class="sw" style="left:292px;top:311px"><i style="background:#CCFFCC"></i></div>
<div class="sw" style="left:310px;top:311px"><i style="background:#CCFFFF"></i></div>
<div class="sw" style="left:328px;top:311px"><i style="background:#99CCFF"></i></div>
<div class="sw" style="left:346px;top:311px"><i style="background:#CC99FF"></i></div>
<div class="sw" style="left:364px;top:311px"><i style="background:#FFFFFF"></i></div>
<div class="sw" style="left:238px;top:339px"><i style="background:#8899E6"></i></div>
<div class="sw" style="left:256px;top:339px"><i style="background:#993366"></i></div>
<div class="sw" style="left:274px;top:339px"><i style="background:#FFFFCC"></i></div>
<div class="sw" style="left:292px;top:339px"><i style="background:#CCFFFF"></i></div>
<div class="sw" style="left:310px;top:339px"><i style="background:#660066"></i></div>
<div class="sw" style="left:328px;top:339px"><i style="background:#FF8080"></i></div>
<div class="sw" style="left:346px;top:339px"><i style="background:#0066CC"></i></div>
<div class="sw" style="left:364px;top:339px"><i style="background:#CCCCFF"></i></div>
<div class="sw" style="left:238px;top:357px"><i style="background:#000080"></i></div>
<div class="sw" style="left:256px;top:357px"><i style="background:#FF00FF"></i></div>
<div class="sw" style="left:274px;top:357px"><i style="background:#FFFF00"></i></div>
<div class="sw" style="left:292px;top:357px"><i style="background:#00FFFF"></i></div>
<div class="sw" style="left:310px;top:357px"><i style="background:#800080"></i></div>
<div class="sw" style="left:328px;top:357px"><i style="background:#800000"></i></div>
<div class="sw" style="left:346px;top:357px"><i style="background:#008080"></i></div>
<div class="sw" style="left:364px;top:357px"><i style="background:#0000FF"></i></div>
<div class="" style="left:233px;top:330px;width:148px;height:1px;background:#b4b0a0"></div>
<div class="" style="left:361px;top:308px;width:18px;height:18px;border:1px dotted #fff;outline:1px solid #d8d4c4"></div>
<div class="dbtn" style="left:237px;top:389px;width:140px;height:20px;"></div>
<div class="" style="left:241px;top:392px;width:132px;height:14px;border:1px dotted #555"></div>
<span class="t" style="left:261.03px;top:391px;font-size:12px;color:#000;transform:scaleX(0.9674);">塗<span class="r" style="font-size:13.5px;transform:scaleX(0.676);margin-right:-17.52px">りつぶし</span>効果(<u>I</u>)...</span>
<div class="btn" style="left:272px;top:464px;width:73px;height:20px;"></div>
<span class="t" style="left:299.12px;top:468px;font-size:12px;color:#000;transform:scaleX(0.8750);">OK</span>
<div class="btn" style="left:356px;top:464px;width:73px;height:20px;"></div>
<span class="t" style="left:366.95px;top:467px;font-size:12px;color:#000;transform:scaleX(1.0455);"><span class="r" style="font-size:13.5px;transform:scaleX(0.676);margin-right:-21.90px">キャンセル</span></span>
<svg style="left:0;top:0" width="853" height="569" viewBox="0 0 853 569"><ellipse cx="57" cy="151" rx="27" ry="16" fill="none" stroke="#f00" stroke-width="1.6"/><ellipse cx="304.7" cy="399" rx="60" ry="16.3" fill="none" stroke="#f00" stroke-width="1.6"/></svg>
<div style="left:445px;top:107px;width:387px;height:448px;background:#0046e0;border-radius:7px 7px 0 0;box-shadow:inset 0 -1px 0 #001496, inset 1px 0 0 #001ed6, inset -1px 0 0 #001496, inset 0 -2px 0 #0028be, inset -2px 0 0 #0028be"></div>
<div style="left:445px;top:107px;width:387px;height:29px;border-radius:7px 7px 0 0;background:linear-gradient(#0058e6 0%,#3a8cff 5%,#2a7cf8 8%,#0a62ee 14%,#0458e4 25%,#0456e2 50%,#0460ee 72%,#0468f8 85%,#0458e4 93%,#003cc8 100%)"></div>
<div class="" style="left:448px;top:136px;width:381px;height:416px;background:#ece9d8"></div>
<span class="t" style="left:452.0px;top:117px;font-size:13px;color:#fff;font-weight:bold;transform:scaleX(1.0000);">塗<span class="r" style="transform:scaleX(0.86);margin-right:-7.28px">りつぶし</span>効果</span>
<div style="left:783px;top:112px;width:21px;height:21px;border:1px solid #fff;border-radius:3px;background:linear-gradient(135deg,#6a9cf4 0%,#3e78ea 45%,#2a62e2 100%)"></div>
<span class="t" style="left:788px;top:113px;font:bold 17px/19px 'Liberation Sans',sans-serif;color:#fff">?</span>
<div style="left:806px;top:112px;width:21px;height:21px;border:1px solid #fff;border-radius:3px;background:linear-gradient(135deg,#f67a66 0%,#f0603e 45%,#e0500e 100%)"></div>
<svg style="left:806px;top:112px" width="21" height="21" viewBox="0 0 21 21"><path d="M5.5 5.5 L15.5 15.5 M15.5 5.5 L5.5 15.5" stroke="#fff" stroke-width="2.2" stroke-linecap="butt" fill="none"/></svg>
<div class="panel" style="left:454px;top:164px;width:288px;height:364px;"></div>
<div class="tab" style="left:456px;top:147px;width:76px;height:17px;"></div>
<div class="tab" style="left:596px;top:147px;width:54px;height:17px;"></div>
<div class="tab" style="left:650px;top:147px;width:53px;height:17px;"></div>
<div class="tab" style="left:529px;top:144px;width:68px;height:21px;"></div>
<div class="" style="left:530px;top:164px;width:66px;height:1px;background:#ece9d8"></div>
<span class="t" style="left:461.0px;top:150px;font-size:12px;color:#000;transform:scaleX(1.0000);"><span class="r" style="font-size:13.5px;transform:scaleX(0.676);margin-right:-30.66px">グラデーション</span></span>
<span class="t" style="left:542.02px;top:150px;font-size:12px;color:#000;transform:scaleX(0.9767);"><span class="r" style="font-size:13.5px;transform:scaleX(0.676);margin-right:-21.90px">テクスチャ</span></span>
<span class="t" style="left:603.97px;top:150px;font-size:12px;color:#000;transform:scaleX(1.0294);"><span class="r" style="font-size:13.5px;transform:scaleX(0.676);margin-right:-17.52px">パターン</span></span>
<span class="t" style="left:669.9px;top:149px;font-size:12px;color:#000;transform:scaleX(1.1000);">図</span>
<span class="t" style="left:461.05px;top:187px;font-size:12px;color:#000;transform:scaleX(0.9516);"><span class="r" style="font-size:13.5px;transform:scaleX(0.676);margin-right:-21.90px">テクスチャ</span>(<u>T</u>):</span>
<div class="tile" style="left:463px;top:206px;width:60px;height:55px"><svg style="left:0;top:0" width="60" height="55"><rect width="60" height="55" filter="url(#tx0)"/></svg></div>
<div class="tile" style="left:526px;top:206px;width:60px;height:55px"><svg style="left:0;top:0" width="60" height="55"><rect width="60" height="55" filter="url(#tx1)"/></svg></div>
<div class="tile" style="left:589px;top:206px;width:60px;height:55px"><svg style="left:0;top:0" width="60" height="55"><rect width="60" height="55" filter="url(#tx2)"/></svg></div>
<div class="tile" style="left:652px;top:206px;width:60px;height:55px"><svg style="left:0;top:0" width="60" height="55"><rect width="60" height="55" filter="url(#tx3)"/></svg></div>
<div class="tile" style="left:463px;top:264px;width:60px;height:55px"><svg style="left:0;top:0" width="60" height="55"><rect width="60" height="55" filter="url(#tx4)"/></svg></div>
<div class="tile" style="left:526px;top:264px;width:60px;height:55px"><svg style="left:0;top:0" width="60" height="55"><rect x="-40" y="-40" width="140" height="135" transform="rotate(-38 30.0 27.5)" filter="url(#tx5)"/></svg></div>
<div class="tile" style="left:589px;top:264px;width:60px;height:55px"><svg style="left:0;top:0" width="60" height="55"><rect width="60" height="55" filter="url(#tx6)"/></svg></div>
<div class="tile" style="left:652px;top:264px;width:60px;height:55px"><svg style="left:0;top:0" width="60" height="55"><rect width="60" height="55" filter="url(#tx7)"/></svg></div>
<div class="tile" style="left:463px;top:321px;width:60px;height:55px"><svg style="left:0;top:0" width="60" height="55"><rect width="60" height="55" filter="url(#tx8)"/></svg></div>
<div class="tile" style="left:526px;top:321px;width:60px;height:55px"><svg style="left:0;top:0" width="60" height="55"><rect width="60" height="55" filter="url(#tx9)"/></svg></div>
<div class="tile" style="left:589px;top:321px;width:60px;height:55px"><svg style="left:0;top:0" width="60" height="55"><rect width="60" height="55" filter="url(#tx10)"/></svg></div>
<div class="tile" style="left:652px;top:321px;width:60px;height:55px"><svg style="left:0;top:0" width="60" height="55"><rect width="60" height="55" filter="url(#tx11)"/></svg></div>
<div class="tile" style="left:463px;top:378px;width:60px;height:55px"><svg style="left:0;top:0" width="60" height="55"><rect width="60" height="55" filter="url(#tx12)"/></svg></div>
<div class="tile" style="left:526px;top:378px;width:60px;height:55px"><svg style="left:0;top:0" width="60" height="55"><rect width="60" height="55" filter="url(#tx13)"/><rect width="60" height="55" fill="url(#wv1)"/></svg></div>
<div class="tile" style="left:589px;top:378px;width:60px;height:55px"><svg style="left:0;top:0" width="60" height="55"><rect width="60" height="55" filter="url(#tx14)"/><rect width="60" height="55" fill="url(#wv2)"/></svg></div>
<div class="tile" style="left:652px;top:378px;width:60px;height:55px"><svg style="left:0;top:0" width="60" height="55"><rect width="60" height="55" filter="url(#tx15)"/><rect width="60" height="55" fill="url(#wv3)"/></svg></div>
<div class="" style="left:462px;top:205px;width:62px;height:57px;border:1px dotted #000"></div>
<div class="" style="left:715px;top:204px;width:15px;height:233px;background:#f6f4ec"></div>
<div class="btn" style="left:715px;top:204px;width:15px;height:17px;"></div>
<svg style="left:720px;top:210px" width="5" height="3" viewBox="0 0 5 3" shape-rendering="crispEdges"><path d="M2 0h1v1h1v1h1v1h-5v-1h1v-1h1z" fill="#000"/></svg>
<div class="btn" style="left:715px;top:221px;width:15px;height:17px;"></div>
<div class="btn" style="left:715px;top:420px;width:15px;height:17px;"></div>
<svg style="left:720px;top:427px" width="5" height="3" viewBox="0 0 5 3" shape-rendering="crispEdges"><path d="M0 0h5v1h-1v1h-1v1h-1v-1h-1v-1h-1z" fill="#000"/></svg>
<div class="" style="left:462px;top:443px;width:270px;height:25px;border:1px solid;border-color:#aca899 #fff #fff #aca899"></div>
<span class="t" style="left:577.97px;top:449px;font-size:12px;color:#000;transform:scaleX(1.0294);">新聞紙</span>
<div class="btn" style="left:607px;top:490px;width:125px;height:20px;"></div>
<span class="t" style="left:615.05px;top:493px;font-size:12px;color:#000;transform:scaleX(0.9545);"><span class="r" style="font-size:13.5px;transform:scaleX(0.676);margin-right:-8.76px">その</span>他<span class="r" style="font-size:13.5px;transform:scaleX(0.676);margin-right:-26.28px">のテクスチャ</span>(<u>O</u>)...</span>
<div class="dbtn" style="left:748px;top:185px;width:74px;height:20px;"></div>
<span class="t" style="left:775.06px;top:189px;font-size:12px;color:#000;transform:scaleX(0.9375);">OK</span>
<div class="btn" style="left:748px;top:212px;width:74px;height:20px;"></div>
<span class="t" style="left:759.95px;top:215px;font-size:12px;color:#000;transform:scaleX(1.0455);"><span class="r" style="font-size:13.5px;transform:scaleX(0.676);margin-right:-21.90px">キャンセル</span></span>
<span class="t" style="left:746.95px;top:437px;font-size:12px;color:#000;transform:scaleX(1.0488);"><span class="r" style="font-size:13.5px;transform:scaleX(0.676);margin-right:-17.52px">サンプル</span> :</span>
<div style="left:750px;top:456px;width:68px;height:59px;border:1px solid #000;overflow:hidden"><svg style="left:0;top:0" width="66" height="57"><rect width="66" height="57" filter="url(#tx0)"/></svg></div>
<svg style="left:0;top:0" width="853" height="569" viewBox="0 0 853 569"><ellipse cx="560.6" cy="156" rx="32" ry="16" fill="none" stroke="#f00" stroke-width="1.6"/><ellipse cx="492.8" cy="230.8" rx="32" ry="27.2" fill="none" stroke="#f00" stroke-width="1.6"/></svg>
<svg style="left:804px;top:190px" width="14" height="23" viewBox="0 0 14 23"><path d="M1.5 1.5V17L5 13.8L8.2 21L10.8 19.8L7.6 12.8H12.6Z" fill="#fff" stroke="#000" stroke-width="1" stroke-linejoin="miter"/></svg>
</body></html>
